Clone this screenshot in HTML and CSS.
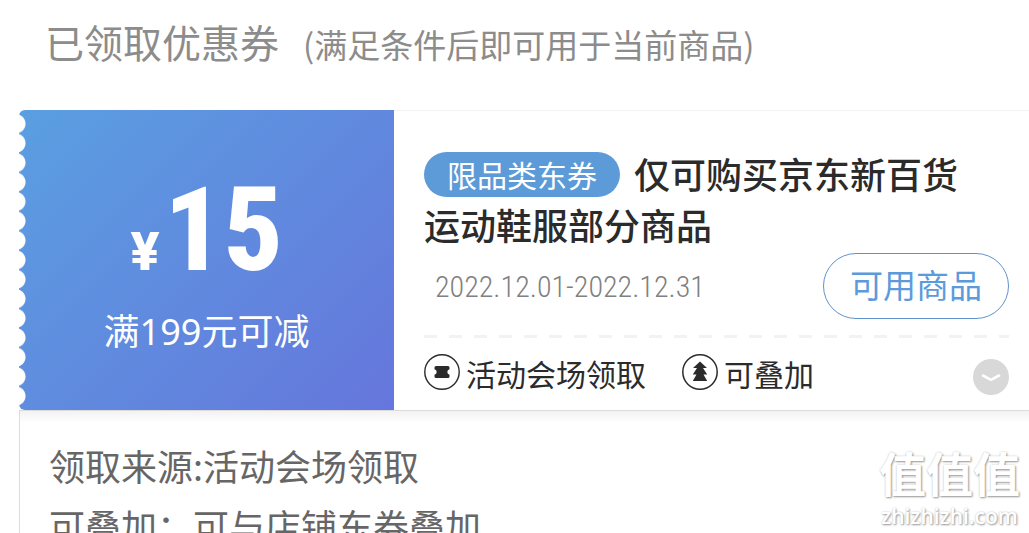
FILE: index.html
```html
<!DOCTYPE html>
<html lang="zh-CN">
<head>
<meta charset="utf-8">
<meta name="viewport" content="width=device-width, initial-scale=1">
<title>已领取优惠券</title>
<link rel="stylesheet" href="styles.css">
</head>
<body>
<main class="page">
  <header class="head">
    <h1 class="head-title">已领取优惠券</h1>
    <p class="head-note">(满足条件后即可用于当前商品)</p>
  </header>
  <article class="coupon">
    <div class="ticket">
      <section class="value">
        <p class="price"><span class="currency">¥</span><span class="amount">15</span></p>
        <p class="condition">满199元可减</p>
      </section>
      <section class="info">
        <h2 class="title"><span class="pill">限品类东券</span>仅可购买京东新百货<br>运动鞋服部分商品</h2>
        <div class="period">
          <time class="date">2022.12.01-2022.12.31</time>
          <button class="use" type="button">可用商品</button>
        </div>
        <div class="divider"></div>
        <div class="tags">
          <span class="tag">
            <svg class="icon" viewBox="0 0 36 36" aria-hidden="true"><circle cx="18" cy="18" r="17.2" fill="none" stroke="#2b2b2b" stroke-width="1.4"/><path fill="#2b2b2b" d="M12 12H24Q25.500 12 25.500 13.500V15.200Q23.300 16 23.300 18T25.500 20.800V22.500Q25.500 24 24 24H12Q10.500 24 10.500 22.500V20.800Q12.700 20 12.700 18T10.500 15.200V13.500Q10.500 12 12 12Z"/></svg>
            活动会场领取
          </span>
          <span class="tag">
            <svg class="icon" viewBox="0 0 36 36" aria-hidden="true"><circle cx="18" cy="18" r="17.2" fill="none" stroke="#2b2b2b" stroke-width="1.5"/><path fill="#2b2b2b" d="M18 7.500L25 14H21L25.200 20.500H21.500L25.200 27H10.800L14.500 20.500H10.800L15 14H11Z"/></svg>
            可叠加
          </span>
          <button class="toggle" type="button" aria-label="展开">
            <svg class="icon" viewBox="0 0 36 36" aria-hidden="true"><circle cx="18" cy="18" r="18" fill="#d8d8d8"/><path d="M10 16.500L18 20.800L26 16.500" fill="none" stroke="#fff" stroke-width="2.600" stroke-linecap="round" stroke-linejoin="round"/></svg>
          </button>
        </div>
      </section>
    </div>
    <div class="details">
      <p>领取来源:活动会场领取</p>
      <p>可叠加：可与店铺东券叠加</p>
    </div>
  </article>
  <div class="watermark">
    <span class="mark-name">值值值</span>
    <span class="mark-site">zhizhizhi.com</span>
  </div>
</main>
</body>
</html>
```
FILE: styles.css
```css
* { box-sizing: border-box; }
body, h1, h2, p { margin: 0; font-weight: 400; }
body {
  background: #fff;
  color: #2b2b2b;
  font-family: "Noto Sans CJK SC", sans-serif;
}
button { font-family: inherit; cursor: pointer; padding: 0; }
.page { position: relative; height: 100vh; overflow: hidden; padding-left: 19px; }
.head {
  display: flex;
  align-items: baseline;
  gap: 24px;
  padding: 11px 26px 0;
  height: 110px;
  color: #8c8c8c;
}
.head-title { font-size: 39px; line-height: 60px; }
.head-note { font-size: 33px; line-height: 60px; }
.ticket { display: flex; }
.value {
  position: relative;
  flex: 0 0 375px;
  display: flex;
  flex-direction: column;
  align-items: center;
  padding-top: 70px;
  height: 300px;
  border-radius: 6px 0 0 6px;
  background: linear-gradient(135deg, #5a9fe1, #6676dc);
  color: #fff;
}
.value::before {
  content: "";
  position: absolute;
  left: 0;
  top: 4px;
  bottom: 4px;
  width: 8px;
  background: radial-gradient(circle at -3px 50%, #fff 9px, transparent 10px) 0 0 / 8px 20px round;
}
.price {
  display: flex;
  align-items: baseline;
  gap: 4px;
  font-family: "Roboto Condensed", Roboto, sans-serif;
  font-weight: 800;
  line-height: 100px;
}
.currency { font-family: Inter, Roboto, sans-serif; font-size: 52px; }
.amount { font-size: 117px; }
.condition { font-family: "Noto Sans", "Noto Sans CJK SC", sans-serif; font-size: 36px; line-height: 60px; }
.info { flex: 1; padding: 37px 20px 0 30px; border-top: 1px solid #f2f2f2; background: #fff; }
.title { margin-bottom: 3px; font-size: 36px; font-weight: 500; line-height: 51px; }
.pill {
  display: inline-block;
  margin: 4px 14px 0 0;
  padding: 0 23px;
  border-radius: 23px;
  background: #5c9bd8;
  color: #fff;
  font-size: 30px;
  font-weight: 400;
  line-height: 45px;
  vertical-align: top;
}
.period { display: flex; align-items: center; justify-content: space-between; padding-left: 11px; }
.date {
  color: #808080;
  font-family: "Roboto Condensed", Roboto, sans-serif;
  font-size: 30px;
  font-weight: 300;
}
.use {
  width: 186px;
  height: 66px;
  padding-bottom: 4px;
  border: 1px solid #5f93cc;
  border-radius: 33px;
  background: #fff;
  color: #5c9bdb;
  font-size: 33px;
}
.divider {
  height: 3px;
  margin-top: 16px;
  background: repeating-linear-gradient(90deg, #f2f2f2 0 13px, transparent 13px 25px);
}
.tags { display: flex; align-items: center; gap: 36px; height: 71px; padding-bottom: 2px; }
.tag { display: flex; align-items: center; gap: 6px; font-size: 30px; line-height: 44px; }
.icon { display: block; width: 36px; height: 36px; }
.tag .icon { margin-bottom: 2px; }
.toggle { margin-left: auto; padding-top: 8px; border: 0; background: none; }
.details {
  padding: 24px 29px;
  border: 1px solid #dcdcdc;
  border-width: 1px 0 0 1px;
  background: linear-gradient(#f2f2f2, #fff 12px);
  color: #666;
  font-size: 36px;
  line-height: 60px;
}
.watermark {
  position: absolute;
  right: 9px;
  bottom: 4px;
  display: flex;
  flex-direction: column;
  align-items: center;
  gap: 6px;
  color: #fff;
  text-shadow: 1px 1px 2px #999, 0 0 2px #ccc;
}
.mark-name { font-size: 47px; font-weight: 700; line-height: 50px; }
.mark-site { font-family: "Open Sans", sans-serif; font-size: 21px; font-weight: 600; line-height: 26px; }
```
